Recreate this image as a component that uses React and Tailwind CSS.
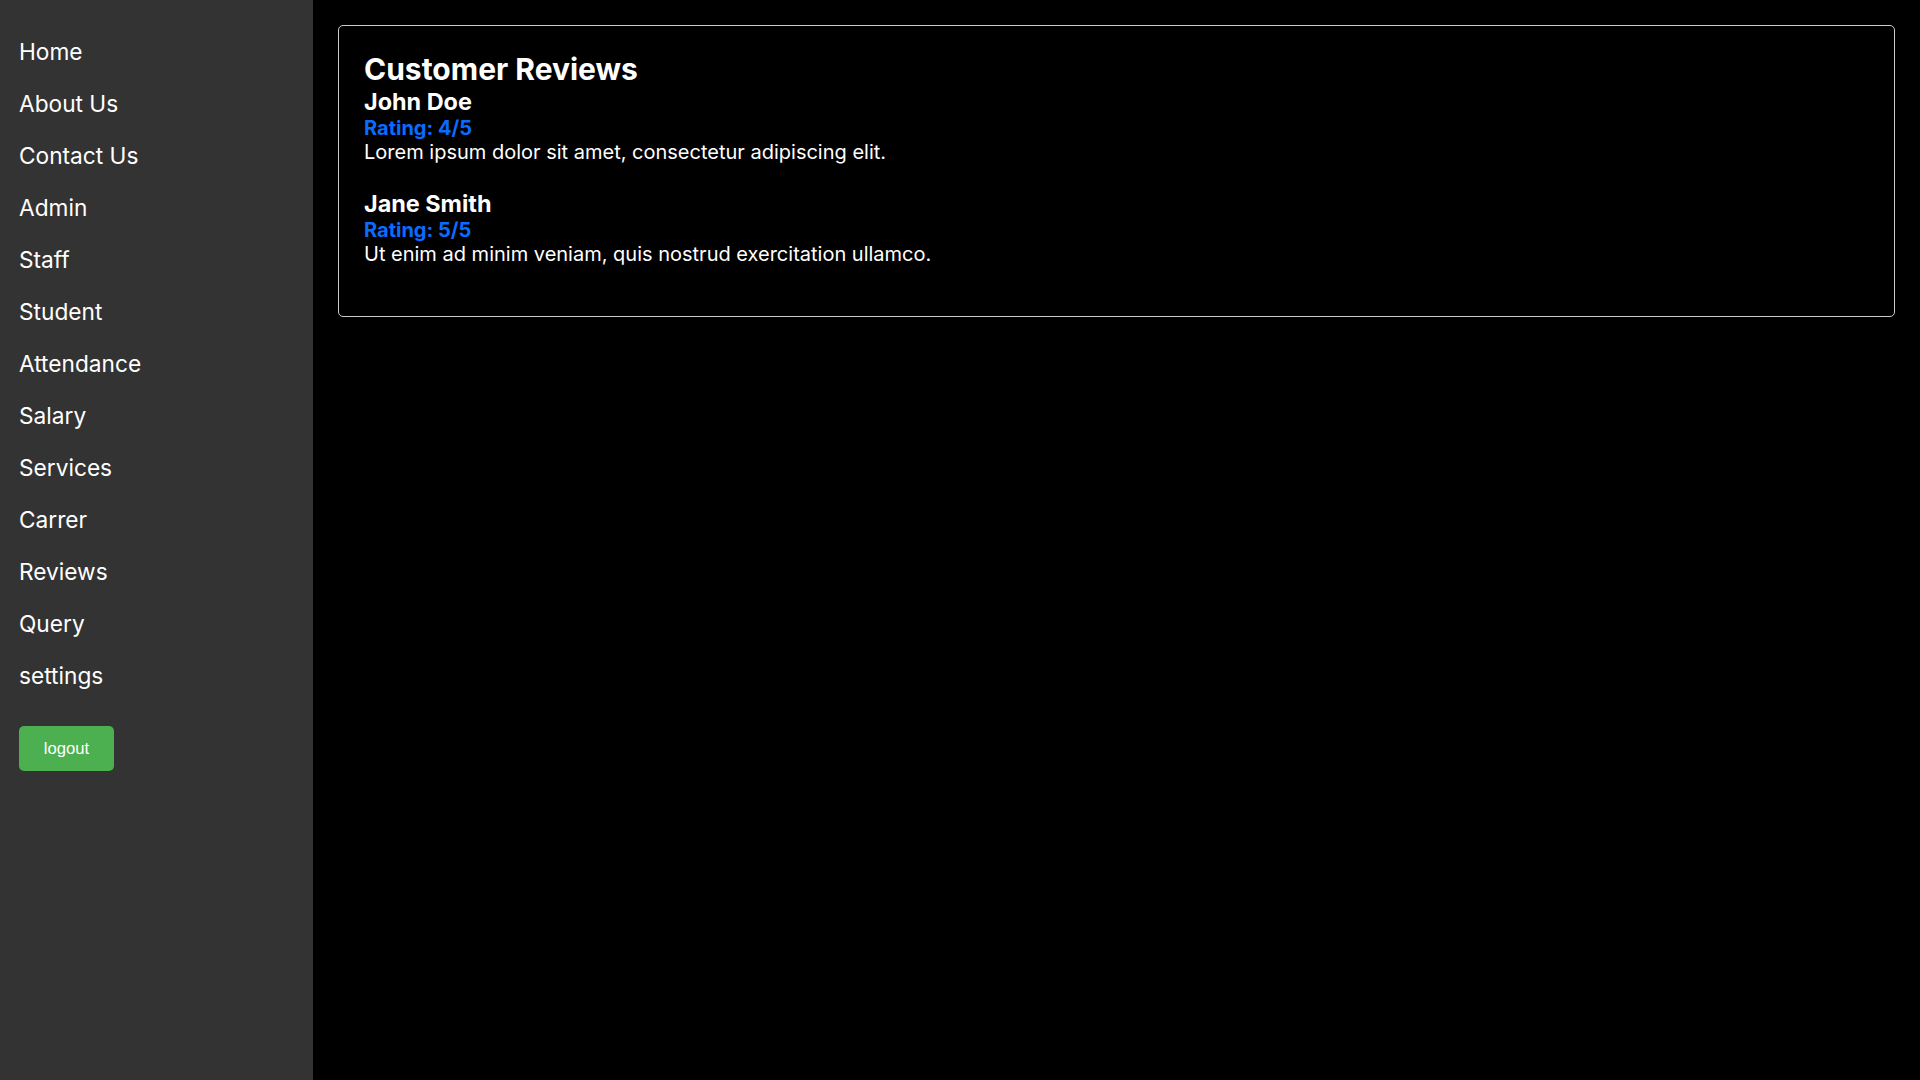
export default function App() {
  const items = [
    "Home",
    "About Us",
    "Contact Us",
    "Admin",
    "Staff",
    "Student",
    "Attendance",
    "Salary",
    "Services",
    "Carrer",
    "Reviews",
    "Query",
    "settings",
  ];
  const reviews = [
    { name: "John Doe", rating: "Rating: 4/5", text: "Lorem ipsum dolor sit amet, consectetur adipiscing elit." },
    { name: "Jane Smith", rating: "Rating: 5/5", text: "Ut enim ad minim veniam, quis nostrud exercitation ullamco." },
  ];
  return (
    <div className="flex min-h-screen bg-black" style={{ fontFamily: "Inter, 'Noto Sans', sans-serif" }}>
      <aside className="w-[313px] shrink-0 bg-[#333333] pt-[26px] px-[19px]">
        <ul>
          {items.map((it) => (
            <li key={it} className="h-[52px] leading-[52px] text-[22.7px] text-white">
              {it}
            </li>
          ))}
        </ul>
        <button
          className="mt-[24px] w-[95px] h-[45px] rounded-[5px] bg-[#4caf50] text-white text-[16.67px]"
          style={{ fontFamily: "'Liberation Sans', Arial, sans-serif" }}
        >
          logout
        </button>
      </aside>
      <main className="flex-1 p-[25px]">
        <div className="border border-[#cccccc] rounded-[5px] pt-[25px] px-[25px] pb-[24px] text-white">
          <h1 className="text-[30px] leading-[37px] font-bold">Customer Reviews</h1>
          {reviews.map((r) => (
            <div key={r.name} className="mb-[25px]">
              <h3 className="text-[23.4px] leading-[28px] font-bold">{r.name}</h3>
              <div className="text-[20px] leading-[24px] font-bold text-[#0a6cff]">{r.rating}</div>
              <p className="text-[20px] leading-[25px]">{r.text}</p>
            </div>
          ))}
        </div>
      </main>
    </div>
  );
}
